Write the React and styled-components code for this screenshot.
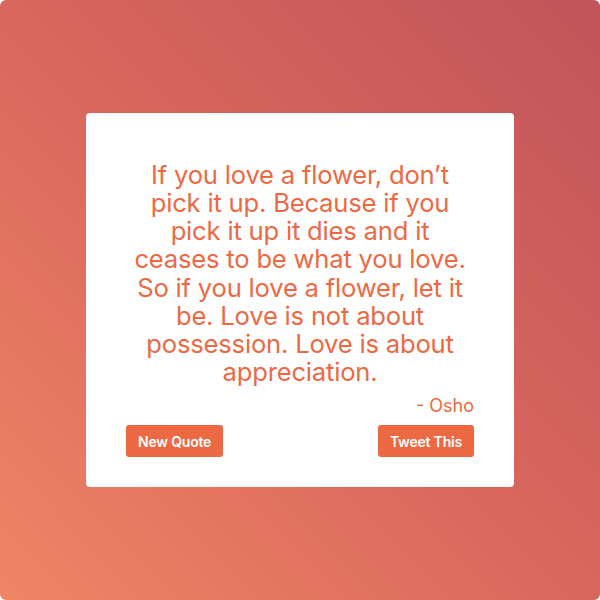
import React from "react";
import styled, { createGlobalStyle } from "styled-components";

const GlobalStyle = createGlobalStyle`
  html, body {
    margin: 0;
    padding: 0;
    background: #ffffff;
  }
  * { box-sizing: border-box; }
`;

const accent = "#ec6944";

const Page = styled.div`
  width: 600px;
  height: 600px;
  border-radius: 6px;
  overflow: hidden;
  background: linear-gradient(to top right, #ef8565 0%, #d8675d 50%, #c2545a 100%);
  display: flex;
  align-items: center;
  justify-content: center;
  font-family: Inter, "Liberation Sans", sans-serif;
`;

const Card = styled.div`
  width: 428px;
  background: #ffffff;
  border-radius: 4px;
  padding: 48px 40px 30px;
  display: flex;
  flex-direction: column;
`;

const Quote = styled.p`
  margin: 0 4px;
  color: ${accent};
  font-size: 25.6px;
  line-height: 28.2px;
  text-align: center;
  letter-spacing: -0.2px;
`;

const Author = styled.p`
  margin: 8px 0 0;
  color: ${accent};
  font-size: 18px;
  line-height: 24px;
  text-align: right;
`;

const Actions = styled.div`
  margin-top: 7px;
  display: flex;
  justify-content: space-between;
`;

const Button = styled.button`
  height: 32px;
  padding: 0 12px;
  border: none;
  border-radius: 3px;
  background: ${accent};
  color: #ffffff;
  font-family: inherit;
  font-size: 14px;
  font-weight: 600;
  letter-spacing: -0.2px;
  cursor: pointer;
`;

export default function App() {
  return (
    <>
      <GlobalStyle />
      <Page>
        <Card>
          <Quote>
            If you love a flower, don’t pick it up. Because if you pick it up it
            dies and it ceases to be what you love. So if you love a flower, let
            it be. Love is not about possession. Love is about appreciation.
          </Quote>
          <Author>- Osho</Author>
          <Actions>
            <Button>New Quote</Button>
            <Button>Tweet This</Button>
          </Actions>
        </Card>
      </Page>
    </>
  );
}
